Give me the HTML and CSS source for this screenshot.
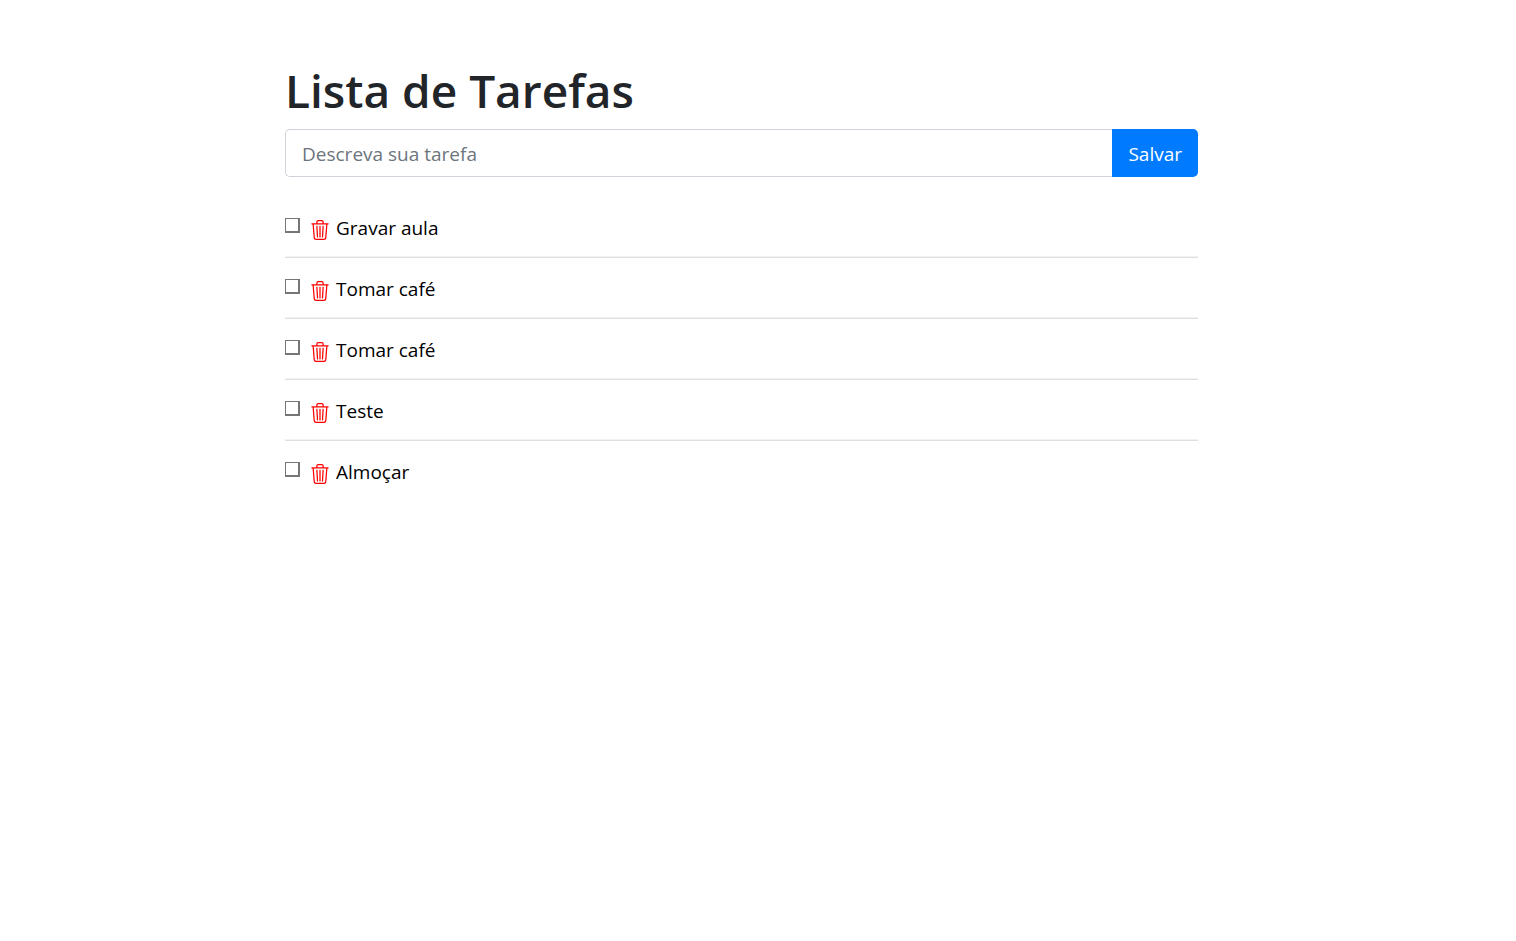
FILE: index.html
```html
<!DOCTYPE html>
<html lang="pt-BR">
<head>
<meta charset="utf-8">
<meta name="viewport" content="width=device-width, initial-scale=1">
<title>Lista de Tarefas</title>
<link rel="stylesheet" href="styles.css">
</head>
<body>
<svg class="sprite" aria-hidden="true">
  <symbol id="trash" viewBox="0 0 16 16">
    <path d="M6.5 1h3a.5.5 0 0 1 .5.5v1H6v-1a.5.5 0 0 1 .5-.5ZM11 2.5v-1A1.5 1.5 0 0 0 9.5 0h-3A1.5 1.5 0 0 0 5 1.5v1H1.5a.5.5 0 0 0 0 1h.538l.853 10.66A2 2 0 0 0 4.885 16h6.23a2 2 0 0 0 1.994-1.84l.853-10.66h.538a.5.5 0 0 0 0-1H11Zm1.958 1-.846 10.58a1 1 0 0 1-.997.92h-6.23a1 1 0 0 1-.997-.92L3.042 3.5h9.916Zm-7.487 1a.5.5 0 0 1 .528.47l.5 8.5a.5.5 0 0 1-.998.06L5 5.03a.5.5 0 0 1 .47-.53Zm5.058 0a.5.5 0 0 1 .47.53l-.5 8.5a.5.5 0 1 1-.998-.06l.5-8.5a.5.5 0 0 1 .528-.47ZM8 4.5a.5.5 0 0 1 .5.5v8.5a.5.5 0 0 1-1 0V5a.5.5 0 0 1 .5-.5Z"/>
  </symbol>
</svg>
<main class="page">
  <div class="container">
    <h1 class="title">Lista de Tarefas</h1>
    <form class="task-form">
      <input class="task-input" type="text" placeholder="Descreva sua tarefa" aria-label="Descreva sua tarefa">
      <button class="save" type="button">Salvar</button>
    </form>
    <ul class="tasks">
      <li class="task">
        <input class="check" type="checkbox" id="t1">
        <button class="remove" type="button" aria-label="Excluir"><svg class="icon"><use href="#trash"/></svg></button>
        <label class="name" for="t1">Gravar aula</label>
      </li>
      <li class="task">
        <input class="check" type="checkbox" id="t2">
        <button class="remove" type="button" aria-label="Excluir"><svg class="icon"><use href="#trash"/></svg></button>
        <label class="name" for="t2">Tomar café</label>
      </li>
      <li class="task">
        <input class="check" type="checkbox" id="t3">
        <button class="remove" type="button" aria-label="Excluir"><svg class="icon"><use href="#trash"/></svg></button>
        <label class="name" for="t3">Tomar café</label>
      </li>
      <li class="task">
        <input class="check" type="checkbox" id="t4">
        <button class="remove" type="button" aria-label="Excluir"><svg class="icon"><use href="#trash"/></svg></button>
        <label class="name" for="t4">Teste</label>
      </li>
      <li class="task">
        <input class="check" type="checkbox" id="t5">
        <button class="remove" type="button" aria-label="Excluir"><svg class="icon"><use href="#trash"/></svg></button>
        <label class="name" for="t5">Almoçar</label>
      </li>
    </ul>
  </div>
</main>
</body>
</html>
```
FILE: styles.css
```css
* {
  box-sizing: border-box;
}

body {
  margin: 0;
  background: #fff;
  color: #212529;
  font-family: "Segoe UI", "Open Sans", sans-serif;
  font-size: 19px;
  line-height: 30px;
}

.sprite {
  display: none;
}

.page {
  padding: 60px 33px 0 0;
}

.container {
  max-width: 913px;
  margin: 0 auto;
}

.title {
  margin: 0 0 9px;
  font-size: 46px;
  font-weight: 600;
  line-height: 60px;
}

.task-form {
  display: flex;
  height: 48px;
}

.task-input {
  flex: 1;
  min-width: 0;
  padding: 2px 16px 0;
  border: 1px solid #ced4da;
  border-right: 0;
  border-radius: 5px 0 0 5px;
  background: #fff;
  color: #495057;
  font: inherit;
}

.task-input::placeholder {
  color: #6c757d;
  opacity: 1;
}

.save {
  padding: 2px 16px 0;
  border: 0;
  border-radius: 0 5px 5px 0;
  background: #007bff;
  color: #fff;
  font: inherit;
}

.tasks {
  margin: 20px 0 0;
  padding: 0;
  list-style: none;
}

.task {
  display: flex;
  align-items: flex-start;
  padding: 16px 0 14px;
  color: #000;
}

.task + .task {
  border-top: 1px solid #dfdfdf;
  box-shadow: 0 -1px #f2f2f2;
}

.check {
  appearance: none;
  width: 15px;
  height: 15px;
  margin: 5px 10px 0 0;
  border: 1px solid #767676;
  border-width: 1px 2px 2px 1px;
  background: #fff;
}

.remove {
  display: flex;
  margin: 7px 6px 0 0;
  padding: 0;
  border: 0;
  background: none;
  color: #f00;
}

.icon {
  width: 20px;
  height: 20px;
  fill: currentColor;
}
```
